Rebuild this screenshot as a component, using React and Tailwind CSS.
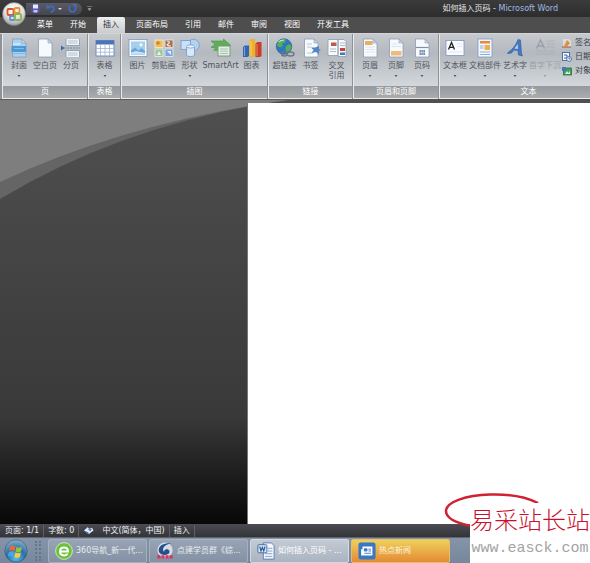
import { useState } from "react";

const TABS = ["菜单", "开始", "插入", "页面布局", "引用", "邮件", "审阅", "视图", "开发工具"];

// shared outline of a sheet with a folded corner
function Sheet({ fill = "#f7fafd", children }) {
  return (
    <svg viewBox="0 0 20 20" className="size-5">
      <path d="M3.500 1h9.500l4 4v14h-13.500z" fill={fill} stroke="#8a9cb5" strokeWidth=".8" />
      {children}
      <path d="M13 1v4h4z" fill="#c9d9ec" stroke="#8a9cb5" strokeWidth=".6" />
    </svg>
  );
}

function CoverIcon() {
  return (
    <Sheet fill="#a9d2f2">
      <path d="M2.500 8h14.500v6H2.500z" fill="#4c98d3" />
      <path d="M5 10.500h10M4 15.500h12.500" stroke="#7cbbe8" strokeWidth="1.200" />
      <path d="M4 6h7" stroke="#d6ebfa" strokeWidth="1.500" />
    </Sheet>
  );
}

function PageBreakIcon() {
  return (
    <svg viewBox="0 0 20 20" className="size-5">
      <path d="M5 1v6.500h13.500V1M5 19v-6.500h13.500V19" fill="#eef3f8" stroke="#8a9cb5" strokeWidth=".9" />
      <path d="M7 3h9.500M7 5h9.500M7 15h9.500M7 17h9.500" stroke="#a7b3c2" strokeWidth=".8" />
      <path d="M3 10h16" stroke="#6c7f99" strokeWidth=".9" strokeDasharray="2 1" />
      <path d="M0 7.500l3.500 2.500L0 12.500z" fill="#3866a8" />
    </svg>
  );
}

function TableIcon() {
  return (
    <svg viewBox="0 0 20 20" className="size-5">
      <rect x="1" y="2.500" width="18" height="15.500" fill="#fff" stroke="#6f8cba" />
      <rect x="1" y="2.500" width="18" height="4" fill="#4a72b8" />
      <path d="M1 10.500h18M1 14.200h18M5.500 7v11M10 7v11M14.500 7v11" stroke="#9fb4d3" strokeWidth=".8" />
    </svg>
  );
}

function PictureIcon() {
  return (
    <svg viewBox="0 0 20 20" className="size-5">
      <rect x="1" y="1.500" width="18" height="17" fill="#f5f9fc" stroke="#7e99b8" strokeWidth=".8" />
      <rect x="3" y="3.500" width="14" height="13" fill="#a3d0f0" />
      <path d="M3 16.500v-4l4-3 3.500 3 3-2.500 3.500 3v3.500z" fill="#6ba5d6" />
      <path d="M3 16.500v-2l5-1.500 9 2v1.500z" fill="#c6e3f5" />
      <circle cx="13" cy="6.800" r="1.600" fill="#fdf9dc" />
    </svg>
  );
}

function ClipArtIcon() {
  return (
    <svg viewBox="0 0 20 20" className="size-5">
      <g stroke="#f2f4f6" strokeWidth=".7">
        <rect x="1" y="2" width="8" height="7.500" fill="#f0c14a" />
        <rect x="11" y="2" width="8" height="7.500" fill="#a8714d" />
        <rect x="1" y="11" width="8" height="7.500" fill="#9cc896" />
        <rect x="11" y="11" width="8" height="7.500" fill="#7aa6dc" />
      </g>
      <circle cx="4" cy="5" r="1.800" fill="#e07a2b" />
      <path d="M13 3c3 0 3 2 1 3s0 2 3 2" stroke="#f5e6da" strokeWidth="1.200" fill="none" />
      <path d="M3 17l2-4 2 4zM13 13h4v4z" fill="#e6f3ff" />
    </svg>
  );
}

function ShapesIcon() {
  return (
    <svg viewBox="0 0 20 20" className="size-5">
      <circle cx="13.500" cy="7" r="5.800" fill="#b4d2f0" stroke="#6e9acd" strokeWidth=".8" />
      <rect x="1" y="2.500" width="9.500" height="9" fill="#c9e0f7" stroke="#6e9acd" strokeWidth=".8" />
      <path d="M6.500 8.500v8.500c0 2 8 2 8 0V8.500" fill="#d8e9fa" stroke="#6e9acd" strokeWidth=".8" />
      <ellipse cx="10.500" cy="8.500" rx="4" ry="1.500" fill="#f1f8ff" stroke="#6e9acd" strokeWidth=".8" />
    </svg>
  );
}

function SmartArtIcon() {
  return (
    <svg viewBox="0 0 22 20" className="h-5 w-6">
      <path d="M1 3h12.500V1l7 6-5 5V9.500H1l4-3.300z" fill="#62ad57" stroke="#4a9448" strokeWidth=".6" />
      <path d="M3 13h5V9.500H5z" fill="#62ad57" />
      <rect x="8" y="8" width="12" height="10" fill="#e3ede4" stroke="#6b9a6d" strokeWidth=".9" />
      <path d="M10 11h8M10 13.200h8M10 15.500h8" stroke="#a3bda8" strokeWidth=".9" />
    </svg>
  );
}

function ChartIcon() {
  return (
    <svg viewBox="0 0 20 20" className="size-5">
      <path d="M1 9l2-1.500h4V18l-1.500 1H1z" fill="#2f66b5" />
      <path d="M7.500 2.500l2-1.500H13v17l-1.500 1h-4z" fill="#f0b21f" />
      <path d="M13.500 5.500l2-1.500H19.500v14L18 19h-4.500z" fill="#c93d20" />
      <path d="M2.500 9v9M9 3v15M15 6v12" stroke="#fff" strokeOpacity=".4" />
    </svg>
  );
}

function LinkIcon() {
  return (
    <svg viewBox="0 0 20 20" className="size-5">
      <circle cx="9" cy="8.500" r="7.800" fill="#2d78bd" stroke="#255c94" strokeWidth=".6" />
      <path d="M3 4c2-2.500 6-3 8-2.500l-1 3 -3 1 1 2-2.500 2L2 8zM11 8l4-2 1.500 3-2 4-3 1-1-3z" fill="#59ad55" />
      <path d="M4 4c1.500-2 4-2 5-2" stroke="#c4e7ed" strokeWidth="1.200" fill="none" />
      <g fill="none" stroke="#6c7682" strokeWidth="1.300">
        <ellipse cx="9.500" cy="16" rx="3" ry="2" />
        <ellipse cx="15.500" cy="16" rx="3.500" ry="2" />
      </g>
    </svg>
  );
}

function BookmarkIcon() {
  return (
    <Sheet>
      <path d="M6 6h5M6 9h4M6 15h6" stroke="#b3bfcd" strokeWidth=".9" />
      <path d="M18 8v3l2 1-2 1v3.500l-3-2.500-4.500 1 2-3-2.500-2.500h4z" fill="#5585c7" />
    </Sheet>
  );
}

function CrossRefIcon() {
  return (
    <svg viewBox="0 0 20 20" className="size-5">
      <path d="M1 1.500h10v16H1zM11 1.500h6l2 2v15h-8z" fill="#f8fafc" stroke="#8a9cb5" strokeWidth=".8" />
      <path d="M4 4.500h5.500v3.500H4z" fill="#bd5a4a" />
      <path d="M13 5h5M13 7.500h5M3 11h6M3 13.500h6" stroke="#a5b1c1" strokeWidth=".9" />
      <path d="M13 10h5v3h-5z" fill="#c1453a" />
      <path d="M13 14.500h5v2.500h-5z" fill="#4379be" />
    </svg>
  );
}

function HeaderIcon() {
  return (
    <Sheet>
      <path d="M5 3h7.500v4H5z" fill="#e7b05c" />
      <path d="M5.500 9h9.500M5.500 11.500h9.500M5.500 14h9.500" stroke="#d5dfeb" strokeWidth=".8" />
    </Sheet>
  );
}

function FooterIcon() {
  return (
    <Sheet>
      <path d="M5 13h10.500v4.500H5z" fill="#eebb7c" />
      <path d="M5.500 6h6M5.500 8.500h9.500" stroke="#d5dfeb" strokeWidth=".8" />
    </Sheet>
  );
}

function PageNumberIcon() {
  return (
    <Sheet>
      <path d="M4 9.500h12.500" stroke="#7f8fa4" strokeWidth="1.200" />
      <rect x="7.500" y="12" width="5.500" height="5" fill="#6f89b5" />
      <path d="M9.300 12v5M11.200 12v5M7.500 14.500H13" stroke="#d5e0f0" strokeWidth=".6" />
    </Sheet>
  );
}

function TextBoxIcon() {
  return (
    <svg viewBox="0 0 20 20" className="size-5">
      <rect x="1" y="2.500" width="18" height="15" fill="#fafcff" stroke="#7c97bd" strokeWidth=".8" />
      <path d="M3.500 11.500L6.500 4.500l3 7M4.500 9.300h4" fill="none" stroke="#222" strokeWidth="1.300" />
      <path d="M11.500 6h5.500M11.500 8.500h5.500M3.500 14h13.500" stroke="#dde4ec" strokeWidth=".8" />
    </svg>
  );
}

function QuickPartsIcon() {
  return (
    <svg viewBox="0 0 20 20" className="size-5">
      <rect x="3" y="1" width="14" height="18" fill="#f2f7fd" stroke="#7f9cc6" strokeWidth=".8" />
      <path d="M5 3h10v2.500H5z" fill="#e58a3e" />
      <path d="M9.500 7h5.500v5H9.500z" fill="#efb04c" />
      <path d="M5 8h3.500M5 10h3.500M5 14h10M5 16.500h10" stroke="#8fadd6" strokeWidth="1" />
    </svg>
  );
}

function WordArtIcon() {
  return (
    <svg viewBox="0 0 20 20" className="size-5">
      <path
        d="M3 14.500C8 11 11 7 13 1.500l2.500.5 1 13.500 1 2.500-4-1-.5-4.500-4-.5-2.500 3-4 .5z"
        fill="#4379c4"
        stroke="#2d5b9f"
        strokeWidth=".6"
      />
      <path d="M9.500 10.500l3.300-4.500v5z" fill="#ccd2d8" />
    </svg>
  );
}

function DropCapIcon() {
  return (
    <svg viewBox="0 0 20 20" className="size-5">
      <path d="M1.500 10.500L5.500 2l4 8.500M3 8h5" fill="none" stroke="#9aa0a8" strokeWidth="1.500" />
      <path d="M11.500 3h8M11.500 6h8M11.500 9h8M1 13h18.500M1 16h18.500" stroke="#aab0b6" strokeWidth=".9" />
    </svg>
  );
}

const GROUPS = [
  {
    name: "页",
    width: "w-[85px]",
    items: [
      { label: "封面", icon: CoverIcon, width: "w-[26px]", menu: true },
      { label: "空白页", icon: Sheet, width: "w-[26px]" },
      { label: "分页", icon: PageBreakIcon, width: "w-[26px]" },
    ],
  },
  {
    name: "表格",
    width: "w-8",
    items: [{ label: "表格", icon: TableIcon, width: "w-[28px]", menu: true }],
  },
  {
    name: "插图",
    width: "w-[146px]",
    items: [
      { label: "图片", icon: PictureIcon, width: "w-[26px]" },
      { label: "剪贴画", icon: ClipArtIcon, width: "w-[26px]" },
      { label: "形状", icon: ShapesIcon, width: "w-[26px]", menu: true },
      { label: "SmartArt", icon: SmartArtIcon, width: "w-[36px]" },
      { label: "图表", icon: ChartIcon, width: "w-[26px]" },
    ],
  },
  {
    name: "链接",
    width: "w-[84px]",
    items: [
      { label: "超链接", icon: LinkIcon, width: "w-[26px]" },
      { label: "书签", icon: BookmarkIcon, width: "w-[26px]" },
      { label: "交叉引用", icon: CrossRefIcon, width: "w-[26px]", wrap: true },
    ],
  },
  {
    name: "页眉和页脚",
    width: "w-[85px]",
    items: [
      { label: "页眉", icon: HeaderIcon, width: "w-[26px]", menu: true },
      { label: "页脚", icon: FooterIcon, width: "w-[26px]", menu: true },
      { label: "页码", icon: PageNumberIcon, width: "w-[26px]", menu: true },
    ],
  },
];

const TEXT_ITEMS = [
  { label: "文本框", icon: TextBoxIcon, width: "w-[26px]", menu: true },
  { label: "文档部件", icon: QuickPartsIcon, width: "w-[34px]", menu: true },
  { label: "艺术字", icon: WordArtIcon, width: "w-[26px]", menu: true },
  { label: "首字下沉", icon: DropCapIcon, width: "w-[34px]", menu: true, disabled: true },
];

function RibbonButton({ item }) {
  const Icon = item.icon;
  return (
    <button
      type="button"
      disabled={item.disabled}
      className={`flex shrink-0 flex-col items-center text-[8px] leading-[10px] text-[#50555c] disabled:text-[#9a9ea3] ${item.width}`}
    >
      <Icon />
      <span className={`mt-[3px] ${item.wrap ? "w-4" : "whitespace-nowrap"}`}>{item.label}</span>
      {item.menu && (
        <svg viewBox="0 0 4 2" className="mt-1 h-[2px] w-1">
          <path d="M.5 0h3L2 2z" fill="currentColor" />
        </svg>
      )}
    </button>
  );
}

function RibbonGroup({ name, width, children }) {
  return (
    <section
      aria-label={name}
      className={`flex shrink-0 flex-col border-b border-l border-[#e8eaec] bg-linear-to-b from-[#c6c9ce] via-[#b4b9bf] via-30% to-[#dfe3e6] ${width}`}
    >
      <div className="flex flex-1 justify-center pt-1">{children}</div>
      <h2 className="bg-linear-to-b from-[#96999d] to-[#aaacaf] text-center text-[8px] leading-[12px] text-white">
        {name}
      </h2>
    </section>
  );
}

function OfficeOrb() {
  return (
    <button type="button" aria-label="Office" className="absolute top-[2px] left-[2px] z-10">
      <svg viewBox="0 0 24 24" className="size-6">
        <defs>
          <radialGradient id="orb" cx=".5" cy=".3" r=".7">
            <stop offset="0" stopColor="#fff" />
            <stop offset=".6" stopColor="#dfe0e2" />
            <stop offset="1" stopColor="#9b9da1" />
          </radialGradient>
        </defs>
        <circle cx="12" cy="12" r="11.500" fill="url(#orb)" stroke="#777" strokeWidth=".6" />
        <g fill="none" strokeWidth="1.800">
          <rect x="5.500" y="7" width="6" height="6" rx="1" stroke="#d9562a" />
          <rect x="12.500" y="6" width="5" height="5" rx="1" stroke="#e8962c" />
          <rect x="8" y="14" width="4.500" height="4" rx="1" stroke="#5b8fd0" />
          <rect x="13" y="12" width="6" height="6" rx="1" stroke="#8db54f" />
        </g>
      </svg>
    </button>
  );
}

function QuickAccess() {
  return (
    <div className="ml-[26px] flex items-center">
      <div className="flex h-3 w-14 items-center justify-center gap-[6px] rounded-r-full bg-linear-to-b from-[#5b5b66] to-[#45454f]">
        <button type="button" aria-label="保存">
          <svg viewBox="0 0 9 9" className="size-[9px]">
            <path d="M.5.500h8v8h-8z" fill="#5654b0" />
            <path d="M2 .5h5v4H2z" fill="#e8ebfa" />
            <path d="M2.500 6h4v2.500h-4z" fill="#c4c8ec" />
          </svg>
        </button>
        <button type="button" aria-label="撤消" className="flex items-center gap-[3px]">
          <svg viewBox="0 0 9 9" className="size-[9px]">
            <path d="M2 3.500c3-2 6-1 6 1.500 0 2-2 3-3.500 3" fill="none" stroke="#3f6dbd" strokeWidth="1.700" />
            <path d="M0 4.800L.8.500l3.500 3.800z" fill="#3f6dbd" />
          </svg>
          <svg viewBox="0 0 4 2" className="h-[2px] w-1">
            <path d="M0 0h4L2 2z" fill="#ddd" />
          </svg>
        </button>
        <button type="button" aria-label="重复">
          <svg viewBox="0 0 9 9" className="size-[9px]">
            <path d="M2 2C0 5 2 8 4.500 8S8.500 5 7 2.500" fill="none" stroke="#3f6dbd" strokeWidth="1.700" />
            <path d="M4 0h4.500v4.500z" fill="#3f6dbd" />
          </svg>
        </button>
      </div>
      <button type="button" aria-label="自定义快速访问工具栏" className="ml-[5px]">
        <svg viewBox="0 0 5 5" className="size-[5px]">
          <path d="M0 .5h5M1 2.500h3L2.500 4.500z" fill="#aaa" stroke="#aaa" strokeWidth=".5" />
        </svg>
      </button>
    </div>
  );
}

function SmallTextButtons() {
  return (
    <div className="flex flex-col gap-1 text-[8px] leading-[10px] text-[#3c4148]">
      <button type="button" className="flex items-center gap-[3px]">
        <svg viewBox="0 0 10 10" className="size-[10px]">
          <path d="M1 1h6l2 2v6H1z" fill="#d9dde2" />
          <path d="M2 8l3-6 3 3-3 3.500z" fill="#df9136" />
          <path d="M0 9h9" stroke="#b0512f" />
        </svg>
        签名
      </button>
      <button type="button" className="flex items-center gap-[3px]">
        <svg viewBox="0 0 10 10" className="size-[10px]">
          <rect x=".5" y=".5" width="7" height="8" fill="#f4f7fc" stroke="#4d6fa9" />
          <path d="M2 3h3v3H2" stroke="#3f64a5" fill="none" />
          <circle cx="7" cy="7" r="2.500" fill="#dfe9f6" stroke="#3f64a5" strokeWidth=".8" />
          <path d="M7 5.500V7h1.300" stroke="#333" strokeWidth=".6" fill="none" />
        </svg>
        日期
      </button>
      <button type="button" className="flex items-center gap-[3px]">
        <svg viewBox="0 0 10 10" className="size-[10px]">
          <rect x="1.500" y="2" width="8" height="7" fill="#3f9c5c" stroke="#2d6f4b" strokeWidth=".8" />
          <path d="M0 1h4v4H0z" fill="#4a72b5" />
          <path d="M3 8l2-3 1.500 2L8 4.500V8z" fill="#d5efdb" />
        </svg>
        对象
      </button>
    </div>
  );
}

function Ribbon() {
  return (
    <div className="flex h-[66px] shrink-0 gap-px overflow-hidden border-t border-[#d3d5d8] bg-[#8f9194] pl-[2px]">
      {GROUPS.map((group) => (
        <RibbonGroup key={group.name} name={group.name} width={group.width}>
          {group.items.map((item) => (
            <RibbonButton key={item.label} item={item} />
          ))}
        </RibbonGroup>
      ))}
      <RibbonGroup name="文本" width="min-w-[178px] flex-1">
        <div className="flex flex-1 pl-[2px]">
          {TEXT_ITEMS.map((item) => (
            <RibbonButton key={item.label} item={item} />
          ))}
          <SmallTextButtons />
        </div>
      </RibbonGroup>
    </div>
  );
}

function DocumentArea() {
  return (
    <main className="relative flex min-h-0 flex-1 overflow-hidden bg-linear-to-b from-[#505050] via-[#393939] via-75% to-[#080808] pt-1">
      {/* swoosh behind the page */}
      <svg viewBox="0 0 300 100" className="absolute top-0 left-0 h-[100px] w-[300px]">
        <path d="M0 0h295Q130 22 0 100z" fill="#656565" />
        <path d="M0 0h295Q130 22 0 83z" fill="#7e7e7e" />
        <path d="M0 .5h300" stroke="#5c5c5c" />
      </svg>
      <div className="relative ml-[247px] flex-1 border-l border-[#777] bg-white" />
    </main>
  );
}

function StatusBar() {
  return (
    <footer className="flex h-[13px] shrink-0 items-center bg-linear-to-b from-[#4b4c54] to-[#333437] pl-[5px] text-[8px] leading-[12px] whitespace-nowrap text-[#f0f0f0]">
      <span className="border-r border-[#5f6066] pr-1">页面: 1/1</span>
      <span className="border-r border-[#5f6066] px-1">字数: 0</span>
      <svg viewBox="0 0 12 10" className="mx-1 h-[9px] w-[11px]">
        <path d="M1 5l4-3.500 2 1.500 3-1 1.500 3-5 4z" fill="#e9eef8" />
        <path d="M1 5l5 2v2.500zM5 3l3 3 2-3z" fill="#5679bd" />
      </svg>
      <span className="px-1">中文(简体，中国)</span>
      <span className="border-x border-[#5f6066] px-1">插入</span>
    </footer>
  );
}

function TaskButton({ tone, label, children }) {
  return (
    <button
      type="button"
      className={`flex h-6 w-[99px] shrink-0 items-center gap-[3px] rounded-[2px] border pl-[6px] text-[8px] whitespace-nowrap ${tone}`}
    >
      {children}
      <span className="truncate">{label}</span>
    </button>
  );
}

function Taskbar() {
  return (
    <nav className="flex h-[26px] shrink-0 items-center gap-[2px] overflow-hidden border-t border-[#5e6672] bg-linear-to-b from-[#8594a8] to-[#76879d]">
      <button type="button" aria-label="开始" className="ml-1 shrink-0">
        <svg viewBox="0 0 24 24" className="size-6">
          <defs>
            <radialGradient id="start" cx=".5" cy=".8" r=".8">
              <stop offset="0" stopColor="#59c3ec" />
              <stop offset=".5" stopColor="#2a6fa8" />
              <stop offset="1" stopColor="#8fb0cd" />
            </radialGradient>
          </defs>
          <circle cx="12" cy="12" r="11.200" fill="url(#start)" stroke="#31506f" strokeWidth=".6" />
          <path d="M6 7.500c2-1 3.500-1 5.500 0l-1 4.500c-2-1-3.500-1-5.500 0z" fill="#ea6a30" />
          <path d="M12.500 8c2 1 3.500 1 5.500 0l-1 4.500c-2 1-3.500 1-5.500 0z" fill="#8fc63f" />
          <path d="M4.800 13c2-1 3.500-1 5.500 0l-1 4.500c-2-1-3.500-1-5.500 0z" fill="#4da3e2" />
          <path d="M11.300 13.500c2 1 3.500 1 5.500 0l-1 4.500c-2 1-3.500 1-5.500 0z" fill="#fbcb3a" />
        </svg>
      </button>
      <div className="mx-[5px] h-5 w-[6px] shrink-0 border-x-2 border-dotted border-[#66758a]" />
      <TaskButton
        tone="border-[#a5b0bf] bg-linear-to-b from-[#98a4b4] to-[#8391a4] text-[#e8ecf1]"
        label="360导航_新一代..."
      >
        <svg viewBox="0 0 20 20" className="size-[18px] shrink-0">
          <circle cx="10" cy="10" r="9.300" fill="#6cc03c" stroke="#d6efc5" />
          <path d="M5 10.500h9.500c0-6-9-6-9 0 0 5 6.500 5.500 8.500 2.500" fill="none" stroke="#fff" strokeWidth="2.200" />
        </svg>
      </TaskButton>
      <TaskButton
        tone="border-[#a5b0bf] bg-linear-to-b from-[#98a4b4] to-[#8391a4] text-[#e8ecf1]"
        label="点建学员群《综..."
      >
        <svg viewBox="0 0 20 20" className="size-[18px] shrink-0">
          <circle cx="10" cy="9" r="8.500" fill="#d5dce5" />
          <path d="M17 1.500C9 1 3 4 3 9c0 5 6 7 11 4 2-2 1-5-2-5-2 0-3 1-3 3-3-3 0-8 8-9.500z" fill="#24508f" />
          <path d="M1.500 16.500h17" stroke="#d7355b" strokeWidth="3.500" strokeDasharray="3.500 1" />
        </svg>
      </TaskButton>
      <TaskButton
        tone="border-[#d3d9e0] bg-linear-to-b from-[#c3cad3] to-[#aab4c1] text-white"
        label="如何插入页码 - ..."
      >
        <svg viewBox="0 0 20 20" className="size-[18px] shrink-0">
          <path d="M7 1h9l3 3v15H7z" fill="#f3f7fc" stroke="#5679ae" />
          <path d="M12 7h5M12 10h5M9 13h8M9 16h8" stroke="#7e9bc8" />
          <rect x="1" y="3" width="10" height="9" rx="1" fill="#dde7f4" stroke="#3c65a5" />
          <path d="M3 5l1.500 5L6 6l1.500 4L9 5" fill="none" stroke="#2b579a" strokeWidth="1.300" />
        </svg>
      </TaskButton>
      <TaskButton
        tone="border-[#e9bd67] bg-linear-to-b from-[#ecd05b] to-[#e58a35] text-[#fff3dc]"
        label="热点新闻"
      >
        <svg viewBox="0 0 20 20" className="size-[18px] shrink-0">
          <rect x=".5" y=".5" width="19" height="19" rx="2.500" fill="#3877c6" />
          <path d="M5 5h11v10H5zM3.500 8H5v7H3.500z" fill="#fff" />
          <path d="M7 7.500h3v2.500H7zM11.500 8H14.500M11.500 10H14.500M7 12.500h7.500" stroke="#3877c6" fill="#3877c6" />
        </svg>
      </TaskButton>
    </nav>
  );
}

function Watermark() {
  return (
    <div className="absolute right-0 bottom-0 flex w-[120px] flex-col items-center bg-white whitespace-nowrap">
      <p className="text-[24px] leading-[36px] font-light text-[#c8102e]">易采站长站</p>
      <p className="pb-1 font-['Liberation_Mono',monospace] text-[15px] leading-[20px] text-[#a3a3a3]">
        www.easck.com
      </p>
    </div>
  );
}

export default function App() {
  const [activeTab, setActiveTab] = useState("插入");

  return (
    <div className="relative flex h-screen flex-col overflow-hidden bg-[#474747] font-['DejaVu_Sans','Noto_Sans_CJK_SC',sans-serif]">
      <OfficeOrb />

      <header className="flex h-[17px] shrink-0 items-center bg-linear-to-b from-[#3b3b3b] to-[#2d2d2d] text-[8px] whitespace-nowrap">
        <QuickAccess />
        <h1 className="ml-auto pr-8 text-[#e8e8e8]">
          如何插入页码 - <span className="text-[#9dbce6]">Microsoft Word</span>
        </h1>
      </header>

      <div role="tablist" className="flex h-4 shrink-0 gap-[5px] bg-[#4e4e4e] pl-[31px] text-[8px] leading-[14px]">
        {TABS.map((tab) => (
          <button
            key={tab}
            type="button"
            role="tab"
            aria-selected={tab === activeTab}
            onClick={() => setActiveTab(tab)}
            className={`shrink-0 rounded-t-[2px] px-[6px] whitespace-nowrap ${
              tab === activeTab ? "bg-linear-to-b from-[#eceeef] to-[#c9ccd0] text-[#333]" : "text-white"
            }`}
          >
            {tab}
          </button>
        ))}
      </div>

      <Ribbon />
      <DocumentArea />
      <StatusBar />
      <Taskbar />

      {/* red pen mark round the page number spot */}
      <svg viewBox="0 0 150 75" className="absolute right-0 bottom-0 h-[75px] w-[150px]">
        <path
          d="M98 15C82 7 64 6 50 6.500C26 7 6 14 6 23C6 30 16 35 31 38"
          fill="none"
          stroke="#cf2233"
          strokeWidth="2.500"
        />
      </svg>
      <Watermark />
    </div>
  );
}
